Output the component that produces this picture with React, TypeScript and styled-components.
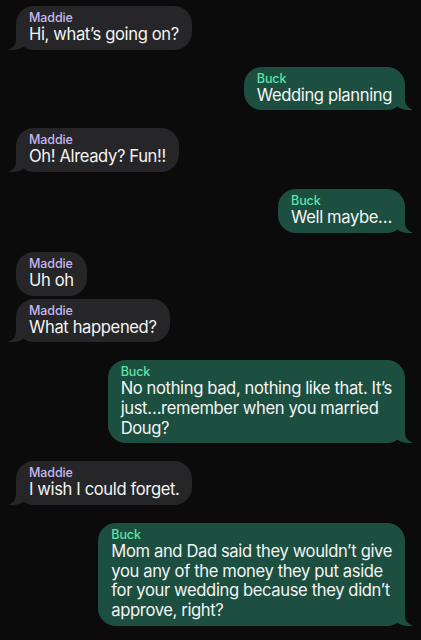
import React from "react";
import styled, { createGlobalStyle, css } from "styled-components";

const Global = createGlobalStyle`
  html, body { margin: 0; padding: 0; background: #0b0b0b; }
  body { font-family: Inter, "Noto Sans", Roboto, sans-serif; -webkit-font-smoothing: antialiased; }
`;

const Thread = styled.div`
  display: flex;
  flex-direction: column;
  padding: 6px 16px 16px 16px;
  background: #0b0b0b;
  min-height: 640px;
  box-sizing: border-box;
`;

type Side = "left" | "right";

const Bubble = styled.div<{ $side: Side; $tail: boolean; $gap: number }>`
  position: relative;
  max-width: 310px;
  box-sizing: border-box;
  padding: 4px 13px 5px 13px;
  border-radius: 18px;
  margin-top: ${(p) => p.$gap}px;
  align-self: ${(p) => (p.$side === "left" ? "flex-start" : "flex-end")};
  background: ${(p) => (p.$side === "left" ? "#262628" : "#1c4f40")};

  ${(p) =>
    p.$tail &&
    (p.$side === "left"
      ? css`
          &::before {
            content: "";
            position: absolute;
            bottom: 0;
            left: -7px;
            width: 20px;
            height: 18px;
            background: #262628;
            border-bottom-right-radius: 15px;
          }
          &::after {
            content: "";
            position: absolute;
            bottom: 0;
            left: -10px;
            width: 10px;
            height: 18px;
            background: #0b0b0b;
            border-bottom-right-radius: 10px;
          }
        `
      : css`
          &::before {
            content: "";
            position: absolute;
            bottom: 0;
            right: -7px;
            width: 20px;
            height: 18px;
            background: #1c4f40;
            border-bottom-left-radius: 15px;
          }
          &::after {
            content: "";
            position: absolute;
            bottom: 0;
            right: -10px;
            width: 10px;
            height: 18px;
            background: #0b0b0b;
            border-bottom-left-radius: 10px;
          }
        `)}
`;

const Inner = styled.div`
  position: relative;
  z-index: 1;
`;

const Name = styled.div<{ $side: Side }>`
  font-size: 12.5px;
  line-height: 15px;
  font-weight: 500;
  letter-spacing: -0.1px;
  color: ${(p) => (p.$side === "left" ? "#c6b6f2" : "#5fe3a9")};
`;

const Line = styled.div`
  font-size: 16.6px;
  line-height: 19.7px;
  color: #f4f4f4;
  letter-spacing: -0.38px;
  white-space: nowrap;
`;

type Msg = { side: Side; lines: string[]; tail: boolean; gap: number };

const messages: Msg[] = [
  { side: "left", lines: ["Hi, what’s going on?"], tail: true, gap: 0 },
  { side: "right", lines: ["Wedding planning"], tail: true, gap: 17 },
  { side: "left", lines: ["Oh! Already? Fun!!"], tail: true, gap: 18 },
  { side: "right", lines: ["Well maybe…"], tail: true, gap: 17 },
  { side: "left", lines: ["Uh oh"], tail: false, gap: 19 },
  { side: "left", lines: ["What happened?"], tail: true, gap: 3 },
  {
    side: "right",
    lines: [
      "No nothing bad, nothing like that. It’s",
      "just…remember when you married",
      "Doug?",
    ],
    tail: true,
    gap: 18,
  },
  { side: "left", lines: ["I wish I could forget."], tail: true, gap: 18 },
  {
    side: "right",
    lines: [
      "Mom and Dad said they wouldn’t give",
      "you any of the money they put aside",
      "for your wedding because they didn’t",
      "approve, right?",
    ],
    tail: true,
    gap: 18,
  },
];

export default function App() {
  return (
    <>
      <Global />
      <Thread>
        {messages.map((m, i) => (
          <Bubble key={i} $side={m.side} $tail={m.tail} $gap={m.gap}>
            <Inner>
              <Name $side={m.side}>{m.side === "left" ? "Maddie" : "Buck"}</Name>
              {m.lines.map((l, j) => (
                <Line key={j}>{l}</Line>
              ))}
            </Inner>
          </Bubble>
        ))}
      </Thread>
    </>
  );
}
